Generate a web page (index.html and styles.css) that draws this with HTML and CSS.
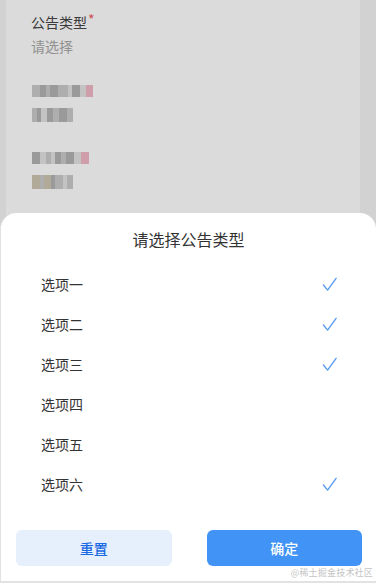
FILE: index.html
```html
<!DOCTYPE html>
<html lang="zh-CN">
<head>
  <meta charset="UTF-8" />
  <title>公告类型</title>
  <link rel="stylesheet" href="styles.css">
</head>
<body>
  <div class="page">
    <div class="form">
      <div class="field">
        <div class="field-label">公告类型<span class="required">*</span></div>
        <div class="field-value">请选择</div>
      </div>

      <div class="field blurred">
        <div class="mosaic">
          <i class="c2 w8"></i><i class="c1 w6"></i><i class="c2 w4"></i><i class="c1 w8"></i><i class="c2 w10"></i><i class="c3 w4"></i><i class="c1 w8"></i><i class="c3 w6"></i><i class="pink w7"></i>
        </div>
        <div class="mosaic tall">
          <i class="c2 w5"></i><i class="c1 w4"></i><i class="c3 w6"></i><i class="c1 w6"></i><i class="c2 w6"></i><i class="c1 w8"></i><i class="c2 w6"></i>
        </div>
      </div>

      <div class="field blurred">
        <div class="mosaic">
          <i class="c1 w8"></i><i class="c3 w6"></i><i class="c2 w5"></i><i class="c3 w4"></i><i class="c1 w6"></i><i class="c2 w5"></i><i class="c1 w8"></i><i class="c3 w7"></i><i class="pink w8"></i>
        </div>
        <div class="mosaic tall">
          <i class="tan w8"></i><i class="c2 w4"></i><i class="tan w7"></i><i class="c1 w4"></i><i class="c2 w8"></i><i class="c3 w4"></i><i class="c2 w6"></i>
        </div>
      </div>
    </div>
  </div>

  <div class="mask"></div>

  <div class="sheet">
    <div class="sheet-title">请选择公告类型</div>

    <ul class="options">
      <li class="option checked">选项一<svg class="check" viewBox="0 0 16 16"><polyline points="1.5,8.5 6,14 15,1.5" /></svg></li>
      <li class="option checked">选项二<svg class="check" viewBox="0 0 16 16"><polyline points="1.5,8.5 6,14 15,1.5" /></svg></li>
      <li class="option checked">选项三<svg class="check" viewBox="0 0 16 16"><polyline points="1.5,8.5 6,14 15,1.5" /></svg></li>
      <li class="option">选项四</li>
      <li class="option">选项五</li>
      <li class="option checked">选项六<svg class="check" viewBox="0 0 16 16"><polyline points="1.5,8.5 6,14 15,1.5" /></svg></li>
    </ul>

    <div class="sheet-footer">
      <button class="btn btn-reset">重置</button>
      <button class="btn btn-confirm">确定</button>
    </div>

    <div class="watermark">@稀土掘金技术社区</div>
  </div>
</body>
</html>
```

FILE: styles.css
```css
:root {
  --text: #333;
  --muted: #aaa;
  --primary: #4194f6;
  --primary-light: #e6f0fc;
  --primary-text: #1a6ae4;
  --check: #5b9cf0;
}

* {
  box-sizing: border-box;
}

body {
  margin: 0;
  width: 376px;
  height: 583px;
  overflow: hidden;
  position: relative;
  background: #f5f5f5;
  font-family: "Noto Sans CJK SC", "Noto Sans", sans-serif;
  color: var(--text);
}

.page {
  height: 100%;
  padding: 0 16px 0 6px;
}

.form {
  height: 100%;
  background: #fff;
  padding: 11px 0 0 25px;
}

.field-label {
  font-size: 14px;
  line-height: 22px;
  color: #454545;
}

.required {
  color: #f05a5a;
  margin-left: 1px;
  position: relative;
  top: -3px;
}

.field-value {
  font-size: 14px;
  line-height: 22px;
  margin-top: 2px;
  color: var(--muted);
}

/* pixelated (blurred-out) fields */
.blurred {
  padding-left: 1px;
  margin-top: 28px;
}

.blurred + .blurred {
  margin-top: 30px;
}

.mosaic {
  display: flex;
  height: 12px;
  margin-bottom: 11px;
  filter: blur(0.7px);
}

.mosaic.tall {
  height: 14px;
  margin-bottom: 0;
}

.mosaic i {
  display: block;
  height: 100%;
}

.w4 { width: 4px; }
.w5 { width: 5px; }
.w6 { width: 6px; }
.w7 { width: 7px; }
.w8 { width: 8px; }
.w10 { width: 10px; }

.c1 { background: #b4b4b4; }
.c2 { background: #cbcbcb; }
.c3 { background: #e4e4e4; }
.pink { background: #f2b8c6; }
.tan { background: #cfc6b2; }

.mask {
  position: absolute;
  inset: 0;
  background: rgba(0, 0, 0, 0.14);
}

.sheet {
  position: absolute;
  left: 0;
  right: 0;
  bottom: 0;
  height: 370px;
  background: #fff;
  border-radius: 16px 16px 0 0;
  border-left: 1px solid #e2e2e2;
  border-bottom: 2px solid #e2e2e2;
}

.sheet-title {
  height: 51px;
  line-height: 53px;
  text-align: center;
  font-size: 16px;
  color: var(--text);
}

.options {
  list-style: none;
  margin: 0;
  padding: 0;
}

.option {
  height: 40px;
  display: flex;
  align-items: center;
  justify-content: space-between;
  padding: 0 39px 0 40px;
  font-size: 14px;
  color: var(--text);
}

.check {
  width: 15px;
  height: 15px;
  fill: none;
  stroke: var(--check);
  stroke-width: 1.5;
  stroke-linecap: round;
  stroke-linejoin: round;
}

.sheet-footer {
  display: flex;
  gap: 35px;
  padding: 26px 14px 0 15px;
}

.btn {
  flex: 1;
  height: 36px;
  border: none;
  border-radius: 6px;
  font-family: inherit;
  font-size: 14px;
  font-weight: 500;
  cursor: pointer;
}

.btn-reset {
  background: var(--primary-light);
  color: var(--primary-text);
}

.btn-confirm {
  background: var(--primary);
  color: #fff;
}

.watermark {
  position: absolute;
  right: 3px;
  bottom: 2px;
  font-size: 9px;
  color: #c4c4c4;
  letter-spacing: 0.2px;
}
```
